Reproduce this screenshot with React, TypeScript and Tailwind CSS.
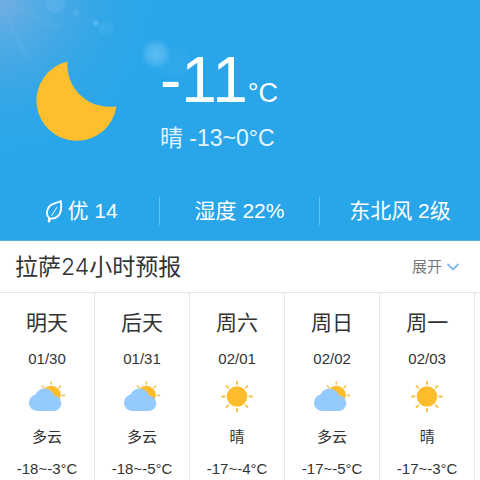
import React from "react";

type Weather = "cloudy" | "sunny";

type Day = {
    name: string;
    date: string;
    weather: Weather;
    range: string;
};

const days: Day[] = [
    { name: "明天", date: "01/30", weather: "cloudy", range: "-18~-3°C" },
    { name: "后天", date: "01/31", weather: "cloudy", range: "-18~-5°C" },
    { name: "周六", date: "02/01", weather: "sunny", range: "-17~-4°C" },
    { name: "周日", date: "02/02", weather: "cloudy", range: "-17~-5°C" },
    { name: "周一", date: "02/03", weather: "sunny", range: "-17~-3°C" },
];

const labels: Record<Weather, string> = { cloudy: "多云", sunny: "晴" };

const SunIcon = () => (
    <svg viewBox="0 0 40 40" className="size-10" aria-hidden="true">
        <circle cx="20" cy="19.5" r="10.3" fill="#fdbc2c" />
        <g stroke="#f9c040" strokeWidth="1.8" strokeLinecap="round">
            <path d="M20 4.6v2.4M20 32v2.4M5.100 19.5h2.400M32.500 19.5h2.400" />
            <path d="M9.400 8.900l1.800 1.800M28.800 28.300l1.800 1.800M9.400 30.100l1.800-1.800M28.800 10.700l1.800-1.800" />
        </g>
    </svg>
);

const CloudIcon = () => (
    <svg viewBox="0 0 40 40" className="size-10" aria-hidden="true">
        <circle cx="24.300" cy="18.300" r="9.500" fill="#fdbc2c" />
        <g stroke="#f4c662" strokeWidth="1.700" strokeLinecap="round">
            <path d="M24.300 5v2M35.500 18.300h2M15.400 9.100l1.400 1.400M32 10.500l1.600-1.400" />
        </g>
        <g fill="#95caff">
            <circle cx="10.200" cy="25.700" r="8.300" />
            <circle cx="17.500" cy="21.500" r="10" />
            <circle cx="26.500" cy="26.200" r="7.800" />
            <rect x="10" y="24" width="16.500" height="10" />
        </g>
    </svg>
);

const MoonIcon = () => (
    <svg viewBox="0 0 82 82" className="size-[82px]" aria-hidden="true">
        <path d="M31.500 1.500A40.200 40.200 0 1 0 80.500 46.200A42 42 0 0 1 31.500 1.500z" fill="#fdbf2d" />
    </svg>
);

const LeafIcon = () => (
    <svg viewBox="0 0 18 24" className="h-6 w-[18px]" fill="none" stroke="currentColor" strokeLinecap="round" strokeLinejoin="round" aria-hidden="true">
        <path d="M4.500 19.500C.8 16 1.200 10.500 5 6.800C8 4 12 4.200 15.800 2C16.600 7.500 17 13.500 12.800 17.300C10.300 19.500 7.500 20 4.500 19.500z" strokeWidth="1.900" />
        <path d="M4.500 19.500L4 22.300" strokeWidth="2.600" />
        <path d="M6.800 16.500L11.800 8.500" strokeWidth="1" />
    </svg>
);

// soft light in the corner and the flares drifting off it
const Glow = () => (
    <svg className="absolute top-0 left-0 h-[240px] w-[240px]" viewBox="0 0 240 240" aria-hidden="true">
        <defs>
            <radialGradient id="glow" cx="0" cy="0" r="170" gradientUnits="userSpaceOnUse">
                <stop offset="0" stopColor="#7fb0e2" stopOpacity="0.850" />
                <stop offset="0.250" stopColor="#62ade2" stopOpacity="0.700" />
                <stop offset="0.550" stopColor="#48a8e2" stopOpacity="0.450" />
                <stop offset="1" stopColor="#29a6ea" stopOpacity="0" />
            </radialGradient>
            <radialGradient id="flare">
                <stop offset="0" stopColor="#6cc4f4" stopOpacity="0.800" />
                <stop offset="0.600" stopColor="#5cbcf2" stopOpacity="0.600" />
                <stop offset="1" stopColor="#4ab4ef" stopOpacity="0" />
            </radialGradient>
        </defs>
        <rect width="240" height="240" fill="url(#glow)" />
        <path d="M0 0L32 62L24 58z" fill="#fff" opacity="0.040" />
        <path d="M0 0L62 26L52 30z" fill="#fff" opacity="0.030" />
        <circle cx="55" cy="3" r="10" fill="#7cc3f2" opacity="0.250" />
        <circle cx="76" cy="13" r="3.500" fill="#7cc8f4" opacity="0.250" />
        <circle cx="96" cy="23" r="3.500" fill="url(#flare)" />
        <circle cx="106" cy="28" r="7.500" fill="#5cbcf2" opacity="0.200" />
        <circle cx="156" cy="54" r="16" fill="url(#flare)" />
        <circle cx="175" cy="63" r="16" fill="#4fb8f0" opacity="0.150" />
    </svg>
);

const App = () => {
    return (
        <main className="bg-white font-['Liberation_Sans','Noto_Sans_CJK_SC',sans-serif] text-[#333]">
            <section className="relative border-b border-[#5aaedb] bg-[#29a6ea] text-white">
                <Glow />
                <div className="relative flex h-[181px] pt-12">
                    <div className="flex w-1/3 pt-3 pl-9">
                        <MoonIcon />
                    </div>
                    <div>
                        <h1 className="flex items-baseline text-[64px] leading-16">
                            -11<span className="text-[27px] leading-8">°C</span>
                        </h1>
                        <p className="mt-3 text-[23px] leading-7 text-[#e4f4fd]">晴 -13~0°C</p>
                    </div>
                </div>
                <ul className="relative grid h-[59px] grid-cols-3 pt-4 text-[21px] leading-7">
                    <li className="flex h-7 items-center justify-center gap-1 border-r border-[#66c1f2] pl-1">
                        <LeafIcon />
                        优 14
                    </li>
                    <li className="h-7 border-r border-[#66c1f2] text-center">湿度 22%</li>
                    <li className="h-7 text-center">东北风 2级</li>
                </ul>
            </section>

            <section>
                <header className="flex h-[52px] items-center justify-between border-b border-[#e5e5e5] pr-5 pl-[15px]">
                    <h2 className="text-[23px] leading-8">
                        拉萨<span className="font-['Inter',sans-serif] font-light">24</span>小时预报
                    </h2>
                    <button className="flex items-center gap-1 text-[15px] leading-5 text-[#777]">
                        展开
                        <svg viewBox="0 0 14 10" className="h-[10px] w-[14px]" fill="none" stroke="#83b9ea" strokeWidth="1.8" aria-hidden="true">
                            <path d="M1.500 2L7 7.500L12.500 2" />
                        </svg>
                    </button>
                </header>
                <ul className="grid auto-cols-[19.8%] grid-flow-col overflow-x-hidden text-center text-[15px] leading-5">
                    {days.map((day) => (
                        <li key={day.date} className="flex flex-col items-center border-r border-[#e5e5e5] pt-4">
                            <h3 className="text-[21px] leading-7">{day.name}</h3>
                            <p className="mt-3">{day.date}</p>
                            <div className="mt-2">
                                {day.weather === "sunny" ? <SunIcon /> : <CloudIcon />}
                            </div>
                            <p className="mt-2.5">{labels[day.weather]}</p>
                            <p className="mt-3">{day.range}</p>
                        </li>
                    ))}
                </ul>
            </section>
        </main>
    );
};

export default App;
